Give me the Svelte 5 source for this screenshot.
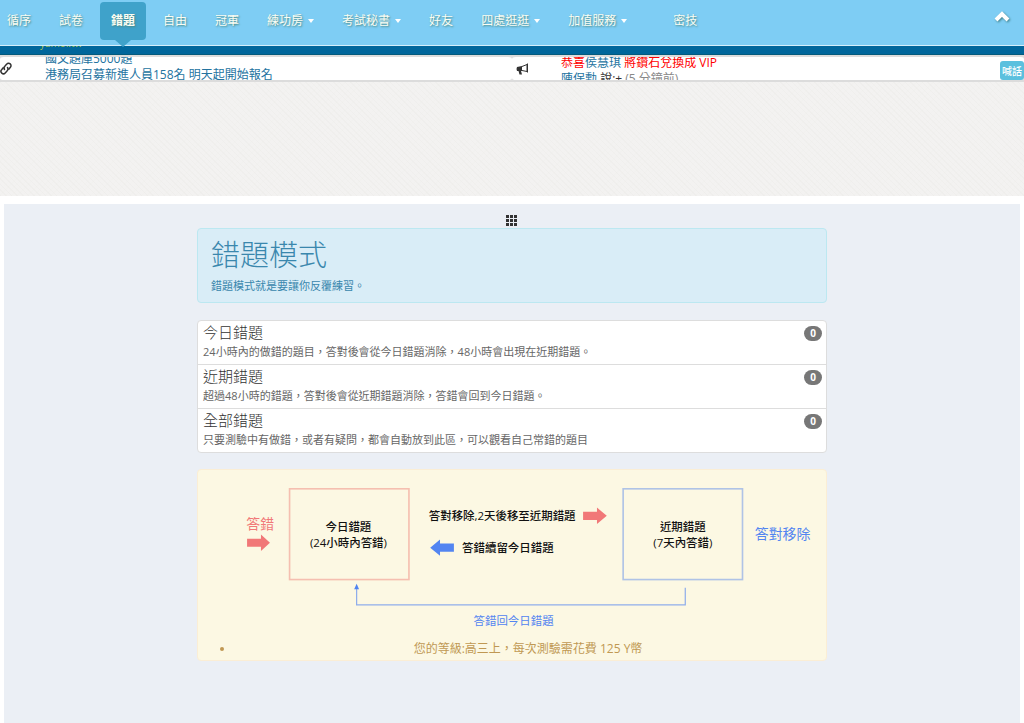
<script lang="ts">
  type NavItem = { label: string; active?: boolean; menu?: boolean; apart?: boolean };

  const navItems: NavItem[] = [
    { label: "循序" },
    { label: "試卷" },
    { label: "錯題", active: true },
    { label: "自由" },
    { label: "冠軍" },
    { label: "練功房", menu: true },
    { label: "考試秘書", menu: true },
    { label: "好友" },
    { label: "四處逛逛", menu: true },
    { label: "加值服務", menu: true },
    { label: "密技", apart: true },
  ];

  const modes = [
    {
      title: "今日錯題",
      text: "24小時內的做錯的題目，答對後會從今日錯題消除，48小時會出現在近期錯題。",
      count: 0,
    },
    {
      title: "近期錯題",
      text: "超過48小時的錯題，答對後會從近期錯題消除，答錯會回到今日錯題。",
      count: 0,
    },
    {
      title: "全部錯題",
      text: "只要測驗中有做錯，或者有疑問，都會自動放到此區，可以觀看自己常錯的題目",
      count: 0,
    },
  ];

  const level = "高三上";
  const cost = 125;

  // how far each ticker has rolled up
  let linkScroll = $state(6);
  let newsScroll = $state(2);
</script>

<header>
  <nav>
    <ul class="menu">
      {#each navItems as item}
        <li class:apart={item.apart}>
          <a href="#top" class:active={item.active}>
            {item.label}{#if item.menu}<span class="caret"></span>{/if}
          </a>
        </li>
      {/each}
    </ul>
    <button class="toTop" aria-label="回到頂端">
      <svg width="18" height="14" viewBox="0 0 18 14">
        <path d="M3 10 9 4l6 6" fill="none" stroke="#fff" stroke-width="4" />
      </svg>
    </button>
  </nav>
  <div class="brandBar"><a href="#top">yamol.tw</a></div>
</header>

<section class="tickers">
  <div class="ticker">
    <svg class="icon" width="13" height="14" viewBox="0 0 13 14">
      <g fill="none" stroke="#333" stroke-width="1.500" stroke-linecap="round">
        <path d="M4.500 7.500C3.500 6 4 5 5 4l1.800-1.900a2.400 2.400 0 0 1 3.600 3.200L8.800 7.200" />
        <path d="M7.500 5.500c1 1.500.5 2.500-.5 3.500l-1.800 1.900a2.400 2.400 0 0 1-3.600-3.200l1.600-1.900" />
      </g>
    </svg>
    <div class="roll">
      <ul style:margin-top="{-linkScroll}px">
        <li><a href="#top">國文題庫5000題</a></li>
        <li><a href="#top">港務局召募新進人員158名 明天起開始報名</a></li>
      </ul>
    </div>
  </div>
  <div class="ticker">
    <svg class="icon" width="13" height="14" viewBox="0 0 13 14">
      <path d="M1 5l5-1v5H5l1 3.500H3.500L2.500 9H1Q0 7 1 5Z" fill="#333" />
      <path d="M6 4.500 11 2.500v7L6 8.500" fill="none" stroke="#333" />
      <path d="M11.500 1.500v9" stroke="#333" />
    </svg>
    <div class="roll">
      <ul style:margin-top="{-newsScroll}px">
        <li class="vip">恭喜<a href="#top">侯慧琪</a> 將鑽石兌換成 VIP</li>
        <li><a href="#top">陳保勳</a> 說:+ <small>(5 分鐘前)</small></li>
      </ul>
    </div>
    <button class="shout">喊話</button>
  </div>
</section>

<div class="banner"></div>

<main>
  <div class="content">
    <button class="grid" aria-label="選單">
      <svg width="12" height="12" viewBox="0 0 12 12" fill="#333">
        {#each [0, 4, 8] as y}
          {#each [0, 4, 8] as x}
            <rect {x} {y} width="3" height="3" />
          {/each}
        {/each}
      </svg>
    </button>

    <div class="intro">
      <h1>錯題模式</h1>
      <p>錯題模式就是要讓你反覆練習。</p>
    </div>

    <div class="modes">
      {#each modes as mode}
        <a href="#top">
          <div>
            <h2>{mode.title}</h2>
            <p>{mode.text}</p>
          </div>
          <span class="badge">{mode.count}</span>
        </a>
      {/each}
    </div>

    <div class="notice">
      <svg class="flow" viewBox="0 0 768 198">
        <g fill="none" stroke-width="2">
          <rect x="112" y="12" width="146" height="111" stroke="#f5bfb0" />
          <rect x="520" y="12" width="146" height="111" stroke="#afc3e6" />
        </g>
        <path d="M194 134v20h402v-21" fill="none" stroke="#8fadeb" stroke-width="1.500" />
        <path d="M194 128l3 7h-6z" fill="#4f83f1" />
        <g fill="#f17878">
          <path d="M60 73h17v-5l11 10-11 10v-5H60z" />
          <path d="M471 40h17v-5l12 10-12 10v-5h-17z" />
        </g>
        <path d="M313 79h-17v-5l-12 10 12 10v-5h17z" fill="#5385f1" />
        <g class="strong">
          <text x="184" y="63">今日錯題</text>
          <text x="184" y="83">(24小時內答錯)</text>
          <text x="593" y="63">近期錯題</text>
          <text x="593" y="83">(7天內答錯)</text>
          <text x="372" y="50">答對移除,2天後移至近期錯題</text>
          <text x="379" y="89">答錯續留今日錯題</text>
        </g>
        <text class="side red" x="76" y="61">答錯</text>
        <text class="side blue" x="715" y="74">答對移除</text>
        <text class="blue" x="386" y="178">答錯回今日錯題</text>
      </svg>
      <ul>
        <li>您的等級:{level}，每次測驗需花費 {cost} Y幣</li>
      </ul>
    </div>
  </div>
</main>

<style>
  :global(body) {
    background: #fff;
    color: #333;
    font-family: "Open Sans", "Noto Sans CJK TC", sans-serif;
    font-size: 12px;
    line-height: 16px;
  }
  ul,
  h1,
  h2,
  p {
    margin: 0;
    padding: 0;
  }
  ul {
    list-style: none;
  }
  a {
    color: #23739f;
    text-decoration: none;
  }
  button {
    border: 0;
    padding: 0;
    background: none;
    cursor: pointer;
    font-family: inherit;
  }

  nav {
    display: flex;
    justify-content: space-between;
    align-items: flex-start;
    height: 45px;
    background: #7ecdf4;
    border-bottom: 1px solid #d5eefa;
  }
  .menu {
    display: flex;
    gap: 6px;
    margin: 2px 0 0 -4px;
  }
  .menu a {
    position: relative;
    display: flex;
    align-items: center;
    height: 38px;
    padding: 0 11px;
    border-radius: 4px;
    color: #fafdf4;
    font-weight: 400;
    white-space: nowrap;
    text-shadow: 1px 1px 2px #4a8a86;
  }
  .menu .active {
    background: #3fa2ca;
    font-weight: 700;
  }
  .menu .active::after {
    content: "";
    position: absolute;
    top: 100%;
    left: 50%;
    margin-left: -8px;
    border: 8px solid transparent;
    border-top: 7px solid #3fa2ca;
    border-bottom: 0;
  }
  .apart {
    margin-left: 18px;
  }
  .caret {
    margin-left: 5px;
    border: 3px solid transparent;
    border-top: 4px solid #fff;
    border-bottom: 0;
  }
  .toTop {
    margin: 10px 13px 0 0;
    line-height: 0;
  }
  .toTop svg {
    filter: drop-shadow(1px 1px 1px #3d8089);
  }
  .brandBar {
    height: 8px;
    background: #00669b;
    border-bottom: 1px solid #045a7c;
    overflow: hidden;
  }
  .brandBar a {
    display: block;
    margin: -9px 0 0 40px;
    color: #a5c34e;
    font-size: 10px;
    line-height: 12px;
  }

  .tickers {
    display: grid;
    grid-template-columns: 1fr 1fr;
    background: #dcdcdc;
  }
  .ticker {
    display: flex;
    align-items: center;
    height: 23px;
    border: solid #dcdcdc;
    border-width: 2px 0;
    border-radius: 4px;
    background: #fff;
  }
  .icon {
    flex: none;
    margin-right: 32px;
  }
  .ticker + .ticker .icon {
    margin: 0 32px 0 4px;
  }
  .roll {
    flex: 1;
    height: 23px;
    overflow: hidden;
    white-space: nowrap;
  }
  .vip {
    color: #f00;
  }
  .roll small {
    color: #888;
    font-size: 12px;
  }
  .shout {
    margin-top: 4px;
    padding: 0 2px;
    height: 19px;
    border-radius: 3px;
    background: #5bc0de;
    color: #fff;
    font-size: 10px;
    font-weight: 500;
  }

  .banner {
    height: 114px;
    background:
      repeating-linear-gradient(45deg, #e9e8e555 0 1px, transparent 1px 4px),
      repeating-linear-gradient(-45deg, #e9e8e599 0 1px, #f3f2f1 1px 4px);
  }

  main {
    min-height: 519px;
    margin: 8px 4px 0;
    background: #ebeff5;
  }
  .content {
    display: flex;
    flex-direction: column;
    width: 62%;
    margin: 0 auto;
    padding-top: 10px;
  }
  .grid {
    align-self: center;
    height: 14px;
    line-height: 0;
  }
  .intro {
    padding: 8px 13px;
    border: 1px solid #bce8f1;
    border-radius: 4px;
    background: #d9edf7;
    color: #3a87ad;
  }
  h1 {
    font-size: 29px;
    font-weight: 300;
    line-height: 36px;
  }
  .intro p {
    margin-top: 5px;
  }
  p {
    font-size: 11px;
  }
  .modes {
    margin-top: 17px;
    border: 1px solid #ddd;
    border-radius: 4px;
    background: #fff;
  }
  .modes a {
    display: flex;
    justify-content: space-between;
    align-items: flex-start;
    padding: 1px 4px 3px 5px;
    color: #666;
  }
  .modes a + a {
    border-top: 1px solid #ddd;
  }
  h2 {
    color: #333;
    font-size: 15px;
    font-weight: 300;
    line-height: 20px;
  }
  .modes p {
    line-height: 19px;
  }
  .badge {
    margin-top: 4px;
    padding: 0 6px;
    border-radius: 8px;
    background: #777;
    color: #fff;
    font-size: 10px;
    font-weight: 700;
    line-height: 15px;
  }

  .notice {
    margin-top: 16px;
    padding: 9px 0 3px;
    border: 1px solid #fbeed5;
    border-radius: 4px;
    background: #fcf8e3;
    color: #c09853;
  }
  .flow {
    display: block;
    width: 100%;
    font-size: 14px;
    text-anchor: middle;
  }
  .flow .strong {
    fill: #111;
    font-weight: 500;
  }
  .flow .side {
    font-size: 17px;
  }
  .red {
    fill: #f17878;
  }
  .blue {
    fill: #5385f1;
  }
  .notice ul {
    padding: 0 5px 0 37px;
    list-style: disc;
    text-align: center;
  }
</style>
